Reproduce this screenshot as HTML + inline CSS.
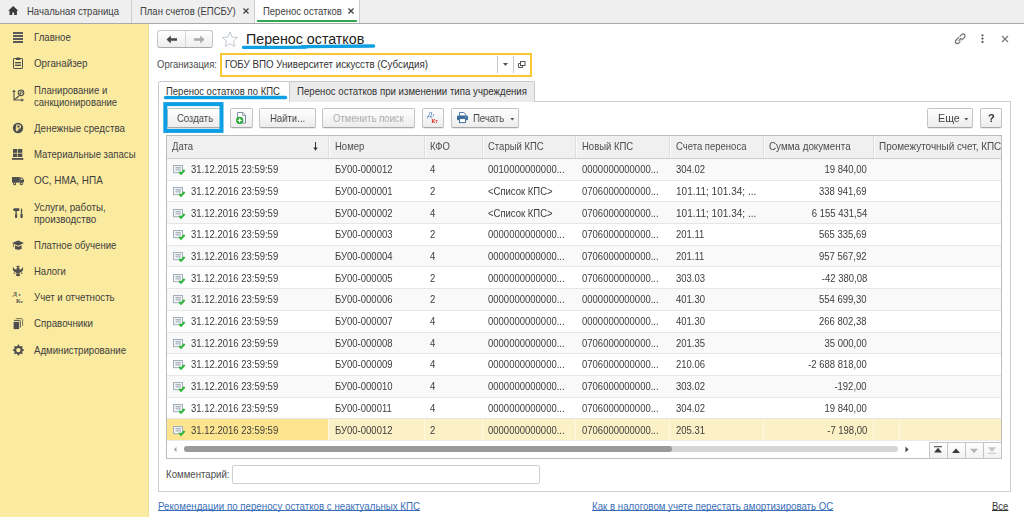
<!DOCTYPE html>
<html><head><meta charset="utf-8">
<style>
*{box-sizing:border-box;margin:0;padding:0}
html,body{width:1024px;height:517px;overflow:hidden;background:#fff;font-family:"Liberation Sans",sans-serif;font-size:9.5px;color:#4d4d4d}
.a{position:absolute;white-space:nowrap;line-height:12px;font-size:10.5px;transform:scaleX(0.905);transform-origin:0 0;margin-top:-1px}
svg.a{transform:none;margin-top:0}
#tabbar{position:absolute;left:0;top:0;width:1024px;height:24px;background:#efefef;border-bottom:1px solid #a9a9a9}
.vsep{position:absolute;top:0;width:1px;height:23px;background:#cdcdcd}
#side{position:absolute;left:0;top:24px;width:149px;height:493px;background:#fbeba0;border-right:1px solid #efdf98}
.si{color:#3e3e3e}
.btn{position:absolute;top:108px;height:20px;border:1px solid #c4c4c4;border-bottom-color:#a9a9a9;border-radius:2px;background:linear-gradient(#ffffff,#ececec);box-shadow:0 1px 0 rgba(0,0,0,0.08)}
.bt{position:absolute;white-space:nowrap;line-height:12px;color:#454545;font-size:10.5px;transform:scaleX(0.905);transform-origin:0 0;margin-top:-1px;will-change:transform}
#panel{position:absolute;left:158px;top:101px;width:853px;height:391px;border:1px solid #cfcfcf}
#table{position:absolute;left:166px;top:135px;width:836px;height:324px;border:1px solid #bdbdbd}
.hd{position:absolute;top:0;height:22px;background:#f2f2f2;border-bottom:1px solid #cfcfcf}
.csep{position:absolute;top:0;width:1px;height:22px;background:#dcdcdc}
.row{position:absolute;left:0;width:834px;height:21.7px;border-bottom:1px solid #e4e4e4}
.c{position:absolute;white-space:nowrap;line-height:12px;color:#3d3d3d;font-size:10.5px;transform:scaleX(0.905);transform-origin:0 0;margin-top:-1px}
</style></head><body>

<!-- TAB BAR -->
<div id="tabbar"></div>
<svg class="a" style="left:8px;top:6px" width="11" height="10" viewBox="0 0 11 10"><path d="M5.2 0 L10.2 4.7 L8.9 4.7 L8.9 9 L6.1 9 L6.1 6.4 L4.3 6.4 L4.3 9 L1.5 9 L1.5 4.7 L0.2 4.7 Z" fill="#3a3a3a"/></svg>
<div class="a" style="left:27px;top:5.9px;color:#404040">Начальная страница</div>
<div class="vsep" style="left:131px"></div>
<div class="a" style="left:139.5px;top:5.9px;color:#404040">План счетов (ЕПСБУ)</div>
<svg class="a" style="left:243px;top:8px" width="6" height="6" viewBox="0 0 6 6"><path d="M0.5 0.5 L5.5 5.5 M5.5 0.5 L0.5 5.5" stroke="#444" stroke-width="1.3"/></svg>
<div class="vsep" style="left:254px"></div>
<div style="position:absolute;left:255px;top:0;width:104px;height:23px;background:#fff"></div>
<div class="vsep" style="left:359px"></div>
<div style="position:absolute;left:257px;top:20px;width:100px;height:2px;background:#2fa84f"></div>
<div class="a" style="left:262.5px;top:5.9px;color:#404040">Перенос остатков</div>
<svg class="a" style="left:348px;top:8px" width="6" height="6" viewBox="0 0 6 6"><path d="M0.5 0.5 L5.5 5.5 M5.5 0.5 L0.5 5.5" stroke="#444" stroke-width="1.3"/></svg>

<!-- SIDEBAR -->
<div id="side"></div>
<div class="a si" style="left:34px;top:32px;transform:scaleX(0.9177)">Главное</div>
<div class="a si" style="left:34px;top:58px;transform:scaleX(0.9312)">Органайзер</div>
<div class="a si" style="left:34px;top:85px;transform:scaleX(0.9104)">Планирование и<br>санкционирование</div>
<div class="a si" style="left:34px;top:123px;transform:scaleX(0.9294)">Денежные средства</div>
<div class="a si" style="left:34px;top:149px;transform:scaleX(0.9131)">Материальные запасы</div>
<div class="a si" style="left:34px;top:175px;transform:scaleX(0.9430)">ОС, НМА, НПА</div>
<div class="a si" style="left:34px;top:202px;transform:scaleX(0.9349)">Услуги, работы,<br>производство</div>
<div class="a si" style="left:34px;top:240px;transform:scaleX(0.9141)">Платное обучение</div>
<div class="a si" style="left:34px;top:266px;transform:scaleX(0.9050)">Налоги</div>
<div class="a si" style="left:34px;top:292px;transform:scaleX(0.9213)">Учет и отчетность</div>
<div class="a si" style="left:34px;top:318px;transform:scaleX(0.9258)">Справочники</div>
<div class="a si" style="left:34px;top:345px;transform:scaleX(0.9195)">Администрирование</div>



<svg class="a" style="left:12px;top:31px" width="12" height="12" viewBox="0 0 12 12"><g fill="#5a5a5a"><rect x="1" y="1" width="10" height="2"/><rect x="1" y="4" width="10" height="2"/><rect x="1" y="7" width="10" height="2"/><rect x="1" y="10" width="10" height="2"/></g></svg>
<svg class="a" style="left:12px;top:57px" width="12" height="12" viewBox="0 0 12 12"><rect x="1.5" y="1.5" width="9" height="10" rx="0.6" fill="none" stroke="#4e4e4e" stroke-width="1"/><path d="M3.6 3 L4.6 0.6 L7.4 0.6 L8.4 3 Z" fill="#4e4e4e"/><rect x="3" y="5" width="6" height="1" fill="#4e4e4e"/><rect x="3" y="6" width="6" height="2" fill="#b9b08a"/><rect x="3" y="8" width="6" height="1" fill="#4e4e4e"/></svg>
<svg class="a" style="left:12px;top:89px" width="13" height="13" viewBox="0 0 13 13"><g stroke="#4e4e4e" stroke-width="1.1" fill="none"><path d="M2 2.5 L2 11 L10 11"/><path d="M2.5 10.5 L7 7"/><circle cx="9" cy="3.8" r="2.8"/></g><path d="M0.3 3 L2 0.6 L3.7 3 Z M9.5 9.3 L12 11 L9.5 12.7 Z" fill="#4e4e4e"/><path d="M8.3 6 L8.3 2.3 L9.6 2.3 Q10.7 2.3 10.7 3.3 Q10.7 4.3 9.6 4.3 L7.6 4.3" stroke="#4e4e4e" stroke-width="0.8" fill="none"/></svg>
<svg class="a" style="left:12px;top:122px" width="12" height="12" viewBox="0 0 12 12"><circle cx="6" cy="6" r="5.2" fill="#4e4e4e"/><path d="M4.8 9.3 L4.8 3 L6.9 3 Q8.5 3 8.5 4.6 Q8.5 6.2 6.9 6.2 L3.8 6.2 M3.8 7.7 L6.6 7.7" stroke="#fbeba0" stroke-width="1.2" fill="none"/></svg>
<svg class="a" style="left:12px;top:148px" width="12" height="12" viewBox="0 0 12 12"><g fill="#4e4e4e"><rect x="1" y="1" width="4.3" height="3.8"/><rect x="6" y="1" width="4.3" height="3.8"/><rect x="1" y="5.5" width="4.3" height="3.5"/><rect x="6" y="5.5" width="4.3" height="3.5"/><rect x="0" y="10" width="11.3" height="1.8"/></g></svg>
<svg class="a" style="left:12px;top:175px" width="13" height="11" viewBox="0 0 13 11"><g fill="#4e4e4e"><rect x="0" y="2" width="7.8" height="5.6"/><path d="M7.8 2.6 L10.3 2.6 L12 5 L12 7.6 L7.8 7.6 Z"/><circle cx="2.6" cy="8.7" r="1.6"/><circle cx="9.3" cy="8.7" r="1.6"/></g><rect x="8.8" y="3.5" width="1.6" height="1.5" fill="#fbeba0"/><circle cx="2.6" cy="8.7" r="0.6" fill="#fbeba0"/><circle cx="9.3" cy="8.7" r="0.6" fill="#fbeba0"/></svg>
<svg class="a" style="left:12px;top:206px" width="12" height="13" viewBox="0 0 12 13"><g fill="#4e4e4e"><path d="M0.8 3.6 L2.2 2.2 L7.3 2.2 L7.3 4.9 L2 4.9 Z"/><rect x="3.4" y="4.9" width="1.4" height="3.3"/><rect x="3" y="8" width="2.2" height="4" rx="0.8"/><path d="M9.55 1.6 Q10.4 3.5 10.2 6.8 L8.9 6.8 Q8.7 3.5 9.55 1.6 Z"/><rect x="9.1" y="6.6" width="0.9" height="1.2"/><rect x="8.4" y="7.6" width="2.3" height="4.4" rx="0.8"/></g></svg>
<svg class="a" style="left:12px;top:239px" width="13" height="12" viewBox="0 0 13 12"><g fill="#4e4e4e"><path d="M0 4 L6.2 1.4 L12 4 L6.2 6.8 Z"/><path d="M3 6.2 L3 10 Q6.2 11.4 9.6 10 L9.6 6.2 L6.2 7.8 Z"/><rect x="1" y="4.4" width="0.9" height="3.8" fill="#7a7355"/></g></svg>
<svg class="a" style="left:12px;top:265px" width="12" height="12" viewBox="0 0 12 12"><g fill="#4e4e4e"><rect x="4.6" y="0.8" width="2.8" height="1.6" rx="0.5"/><path d="M0.9 1.6 Q1.6 3.6 3 4.2 L4.6 4.4 L4.6 2.8 L7.4 2.8 L7.4 4.4 L9 4.2 Q10.4 3.6 11.1 1.6 Q11.6 5.2 10 6.6 L8 7.4 L7.4 8.6 L4.6 8.6 L4 7.4 L2 6.6 Q0.4 5.2 0.9 1.6 Z"/><ellipse cx="6" cy="9.9" rx="2.1" ry="1.3"/><rect x="1.6" y="7.4" width="1.6" height="1.4" rx="0.5"/><rect x="8.8" y="7.4" width="1.6" height="1.4" rx="0.5"/></g><path d="M3 3.3 L4 4 M9 3.3 L8 4" stroke="#fbeba0" stroke-width="0.8"/></svg>
<svg class="a" style="left:12px;top:291px" width="13" height="13" viewBox="0 0 13 13"><text x="0.5" y="5.2" font-family="Liberation Serif" font-weight="bold" font-size="6.6" fill="#505050">Д</text><text x="6.2" y="5.2" font-family="Liberation Serif" font-weight="bold" font-size="5" fill="#505050">т</text><text x="4" y="11.6" font-family="Liberation Serif" font-weight="bold" font-size="6.6" fill="#505050">К</text><text x="8.6" y="11.6" font-family="Liberation Serif" font-weight="bold" font-size="5" fill="#505050">т</text></svg>
<svg class="a" style="left:12px;top:317px" width="12" height="13" viewBox="0 0 12 13"><path d="M4.2 1.6 L9.6 1.6 Q10.6 1.6 10.6 2.6 L10.6 8.8" stroke="#7a7355" stroke-width="1" fill="none"/><path d="M2 3.4 L7.6 3.4 Q8.3 3.4 8.3 4.1 L8.3 10.6" stroke="#4e4e4e" stroke-width="1" fill="none"/><rect x="1.6" y="4.9" width="5.4" height="7.2" fill="#4e4e4e"/></svg>
<svg class="a" style="left:12px;top:344px" width="12" height="12" viewBox="0 0 12 12"><g fill="#4e4e4e"><path d="M6 0.6 L7 0.6 L7.4 2 L8.8 2.6 L10 1.9 L10.8 2.7 L10.1 3.9 L10.7 5.3 L12 5.6 L12 6.6 L10.7 7 L10.1 8.3 L10.8 9.5 L10 10.3 L8.8 9.6 L7.4 10.2 L7 11.6 L5.8 11.6 L5.4 10.2 L4 9.6 L2.8 10.3 L2 9.5 L2.7 8.3 L2.1 7 L0.8 6.6 L0.8 5.6 L2.1 5.3 L2.7 3.9 L2 2.7 L2.8 1.9 L4 2.6 L5.4 2 Z"/></g><circle cx="6.4" cy="6.1" r="2.2" fill="#fbeba0"/></svg>

<!-- FORM -->

<!-- header -->
<div style="position:absolute;left:157px;top:30px;width:56px;height:18px;border:1px solid #c6c6c6;border-bottom-color:#a8a8a8;border-radius:3px;background:linear-gradient(#fff,#eeeeee)"></div>
<div style="position:absolute;left:185px;top:31px;width:1px;height:16px;background:#d6d6d6"></div>
<svg class="a" style="left:166px;top:35px" width="12" height="9" viewBox="0 0 12 9"><path d="M0.5 4.5 L4.8 0.5 L4.8 3.3 L11 3.3 L11 5.7 L4.8 5.7 L4.8 8.5 Z" fill="#474747"/></svg>
<svg class="a" style="left:193px;top:35px" width="12" height="9" viewBox="0 0 12 9"><path d="M11.5 4.5 L7.2 0.5 L7.2 3.3 L1 3.3 L1 5.7 L7.2 5.7 L7.2 8.5 Z" fill="#ababab"/></svg>
<svg class="a" style="left:221px;top:31px" width="18" height="17" viewBox="0 0 18 17"><path d="M9 1 L11.2 6.1 L16.6 6.5 L12.5 10 L13.8 15.5 L9 12.6 L4.2 15.5 L5.5 10 L1.4 6.5 L6.8 6.1 Z" fill="none" stroke="#c3c9d0" stroke-width="1"/></svg>
<div class="a" style="left:246px;top:30.5px;font-size:14px;line-height:17px;color:#222;transform:scaleX(1.017);margin-top:0">Перенос остатков</div>
<svg class="a" style="left:240px;top:43px" width="138" height="7" viewBox="0 0 138 7"><path d="M3.4 4.3 Q35 4.5 66 4.2" stroke="#0fa0e4" stroke-width="3.3" fill="none" stroke-linecap="round"/><path d="M62 3.6 Q100 3.3 133.6 3" stroke="#0fa0e4" stroke-width="3.3" fill="none" stroke-linecap="round"/></svg>
<svg class="a" style="left:953px;top:33px" width="14" height="12" viewBox="0 0 14 12"><g fill="none" stroke="#6e6e6e" stroke-width="1.2"><path d="M6 4.2 L3.2 7 Q1.6 8.6 3 10 Q4.4 11.4 6 9.8 L7.4 8.4"/><path d="M6.6 3.6 L8.4 1.8 Q10 0.2 11.4 1.6 Q12.8 3 11.2 4.6 L8.4 7.4"/><path d="M5.6 7.8 L8.4 5"/></g></svg>
<svg class="a" style="left:980px;top:34px" width="5" height="10" viewBox="0 0 5 10"><g fill="#555"><circle cx="2.5" cy="1.3" r="1.1"/><circle cx="2.5" cy="4.6" r="1.1"/><circle cx="2.5" cy="7.9" r="1.1"/></g></svg>
<svg class="a" style="left:1001px;top:35px" width="8" height="8" viewBox="0 0 8 8"><path d="M1 1 L7 7 M7 1 L1 7" stroke="#777" stroke-width="1.2"/></svg>

<div class="a" style="left:157px;top:59px;color:#4d4d4d">Организация:</div>
<div style="position:absolute;left:220px;top:53px;width:312px;height:24px;border:2px solid #f8c834;background:#fff"></div>
<div class="a" style="left:225px;top:59px;color:#333;transform:scaleX(0.929)">ГОБУ ВПО Университет искусств (Субсидия)</div>
<div style="position:absolute;left:497px;top:56px;width:1px;height:17px;background:#c8c8c8"></div>
<div style="position:absolute;left:513px;top:56px;width:1px;height:17px;background:#c8c8c8"></div>
<svg class="a" style="left:503px;top:63px" width="5" height="3" viewBox="0 0 5 3"><path d="M0 0 L5 0 L2.5 3 Z" fill="#555"/></svg>
<svg class="a" style="left:517px;top:60px" width="9" height="9" viewBox="0 0 9 9"><g fill="none" stroke="#555" stroke-width="1"><rect x="3.5" y="1.5" width="4.5" height="4"/><path d="M3.5 3.5 L1.5 3.5 L1.5 7.5 L5.5 7.5 L5.5 5.5"/></g></svg>

<!-- tabs -->
<div id="panel"></div>
<div style="position:absolute;left:289px;top:81px;width:246px;height:21px;background:#ebebeb;border:1px solid #c9c9c9;border-bottom:none;border-radius:2px 2px 0 0"></div>
<div style="position:absolute;left:158px;top:81px;width:132px;height:21px;background:#fff;border:1px solid #c9c9c9;border-bottom:none;border-radius:2px 2px 0 0"></div>
<div class="a" style="left:166px;top:86px;color:#333">Перенос остатков по КПС</div>
<div class="a" style="left:297px;top:86px;color:#333;transform:scaleX(0.920)">Перенос остатков при изменении типа учреждения</div>
<svg class="a" style="left:161px;top:94px" width="130" height="7" viewBox="0 0 130 7"><path d="M4.4 3.6 Q60 3.5 124.6 3.5" stroke="#0fa0e4" stroke-width="3.4" fill="none" stroke-linecap="round"/></svg>

<!-- command bar -->
<div class="btn" style="left:167px;width:54px"></div>
<div class="bt" style="left:176.5px;top:113px">Создать</div>
<svg class="a" style="left:161px;top:100px" width="65" height="35" viewBox="0 0 65 35"><rect x="4.3" y="4.1" width="56.2" height="26.8" fill="none" stroke="#0d9fe3" stroke-width="4"/></svg>
<div class="btn" style="left:230px;width:23px"></div>
<svg class="a" style="left:234px;top:111px" width="14" height="14" viewBox="0 0 14 14"><path d="M3.5 1.5 L8.8 1.5 L11.5 4.2 L11.5 12 L3.5 12 Z" fill="#fff" stroke="#7d8ea3" stroke-width="1"/><path d="M8.5 1.5 L8.5 4.5 L11.5 4.5" fill="none" stroke="#7d8ea3" stroke-width="0.8"/><circle cx="5.7" cy="9.3" r="3.6" fill="#23a634"/><path d="M5.7 7.2 L5.7 11.4 M3.6 9.3 L7.8 9.3" stroke="#fff" stroke-width="1.3"/></svg>
<div class="btn" style="left:259px;width:57px"></div>
<div class="bt" style="left:269.5px;top:113px">Найти...</div>
<div class="btn" style="left:322px;width:93px"></div>
<div class="bt" style="left:333px;top:113px;color:#a9a9a9">Отменить поиск</div>
<div class="btn" style="left:422px;width:22px"></div>
<svg class="a" style="left:425px;top:110px" width="16" height="15" viewBox="0 0 16 15"><g transform="translate(1.5,0) skewX(-14)"><text x="2.4" y="7.4" font-family="Liberation Sans" font-size="7" fill="#4a7fb8">Д</text><text x="7" y="7.4" font-family="Liberation Sans" font-size="5.2" fill="#4a7fb8">т</text></g><text x="6.6" y="13" font-family="Liberation Sans" font-weight="bold" font-size="6.2" fill="#d6281c">К</text><text x="10.6" y="13" font-family="Liberation Sans" font-weight="bold" font-size="4.8" fill="#d6281c">т</text></svg>
<div class="btn" style="left:451px;width:68px"></div>
<svg class="a" style="left:456px;top:111px" width="13" height="13" viewBox="0 0 13 13"><path d="M3.5 4.5 L3.5 1.5 L7.6 1.5 L9.5 3.2 L9.5 4.5" fill="#fff" stroke="#3a6a98" stroke-width="0.9"/><rect x="1" y="4.5" width="11" height="4.8" rx="1.3" fill="#3a6a98"/><rect x="3.5" y="7.6" width="6" height="4" fill="#fff" stroke="#3a6a98" stroke-width="0.9"/><rect x="9" y="5.6" width="1.6" height="0.8" fill="#a8c0d8"/></svg>
<div class="bt" style="left:473px;top:113px">Печать</div>
<svg class="a" style="left:510px;top:117.5px" width="5" height="3" viewBox="0 0 5 3"><path d="M0.3 0 L4.3 0 L2.3 2.5 Z" fill="#555"/></svg>
<div class="btn" style="left:927px;width:46px"></div>
<div class="bt" style="left:937.5px;top:113px;transform:scaleX(1.02)">Еще</div>
<svg class="a" style="left:964px;top:117.5px" width="5" height="3" viewBox="0 0 5 3"><path d="M0.3 0 L4.3 0 L2.3 2.5 Z" fill="#555"/></svg>
<div class="btn" style="left:980px;width:22px"></div>
<div class="bt" style="left:987.5px;top:111.5px;font-weight:bold;font-size:11px;color:#333;transform:none;margin-top:0">?</div>

<!-- TABLE -->
<div style="position:absolute;left:166px;top:135px;width:836px;height:324px;border:1px solid #bcbcbc;background:#fff"></div>
<div style="position:absolute;left:167px;top:136px;width:834px;height:23px;background:#f0f0f0;border-bottom:1px solid #cdcdcd"></div>
<div style="position:absolute;left:328px;top:136px;width:1px;height:22px;background:#dedede"></div>
<div style="position:absolute;left:329px;top:136px;width:1px;height:22px;background:#fafafa"></div>
<div style="position:absolute;left:424px;top:136px;width:1px;height:22px;background:#dedede"></div>
<div style="position:absolute;left:425px;top:136px;width:1px;height:22px;background:#fafafa"></div>
<div style="position:absolute;left:482px;top:136px;width:1px;height:22px;background:#dedede"></div>
<div style="position:absolute;left:483px;top:136px;width:1px;height:22px;background:#fafafa"></div>
<div style="position:absolute;left:575px;top:136px;width:1px;height:22px;background:#dedede"></div>
<div style="position:absolute;left:576px;top:136px;width:1px;height:22px;background:#fafafa"></div>
<div style="position:absolute;left:669px;top:136px;width:1px;height:22px;background:#dedede"></div>
<div style="position:absolute;left:670px;top:136px;width:1px;height:22px;background:#fafafa"></div>
<div style="position:absolute;left:763px;top:136px;width:1px;height:22px;background:#dedede"></div>
<div style="position:absolute;left:764px;top:136px;width:1px;height:22px;background:#fafafa"></div>
<div style="position:absolute;left:873px;top:136px;width:1px;height:22px;background:#dedede"></div>
<div style="position:absolute;left:874px;top:136px;width:1px;height:22px;background:#fafafa"></div>
<div class="c" style="left:172px;top:141px;color:#4d4d4d">Дата</div>
<div class="c" style="left:335px;top:141px;color:#4d4d4d">Номер</div>
<div class="c" style="left:430px;top:141px;color:#4d4d4d">КФО</div>
<div class="c" style="left:488px;top:141px;color:#4d4d4d">Старый КПС</div>
<div class="c" style="left:582px;top:141px;color:#4d4d4d">Новый КПС</div>
<div class="c" style="left:675.5px;top:141px;color:#4d4d4d">Счета переноса</div>
<div class="c" style="left:769px;top:141px;color:#4d4d4d;transform:scaleX(0.937)">Сумма документа</div>
<div class="c" style="left:879px;top:141px;color:#4d4d4d;transform:scaleX(0.946)">Промежуточный счет, КПС</div>
<svg class="a" style="left:313px;top:142px" width="5" height="9" viewBox="0 0 5 9"><path d="M2.5 0 L2.5 8" stroke="#333" stroke-width="1"/><path d="M0.3 5.6 L2.5 8.8 L4.7 5.6 Z" fill="#333"/></svg>
<div style="position:absolute;left:167px;top:159.0px;width:834px;height:21.7px;background:#f9f9f9;border-bottom:1px solid #e6e6e6"></div>
<svg class="a" style="left:172px;top:165px" width="14" height="11" viewBox="0 0 14 11"><rect x="1.5" y="0.5" width="9" height="7.2" fill="#f4f6f8" stroke="#a3aebb" stroke-width="1"/><rect x="3.5" y="2.4" width="5.4" height="2.6" fill="#d3d8de"/><path d="M3.5 2.4 L8.9 2.4 M3.5 5 L8.9 5" stroke="#9aa5b2" stroke-width="0.8"/><path d="M7.2 6.9 L9 8.8 L12.6 5" stroke="#2fb53c" stroke-width="2" fill="none"/></svg>
<div class="c" style="left:190.5px;top:164px">31.12.2015 23:59:59</div>
<div class="c" style="left:335px;top:164px">БУ00-000012</div>
<div class="c" style="left:430px;top:164px">4</div>
<div class="c" style="left:488px;top:164px">0010000000000...</div>
<div class="c" style="left:582px;top:164px">0000000000000...</div>
<div class="c" style="left:675.5px;top:164px">304.02</div>
<div class="c" style="right:157px;top:164px;text-align:right;transform-origin:100% 0">19 840,00</div>
<div style="position:absolute;left:167px;top:180.7px;width:834px;height:21.7px;background:#ffffff;border-bottom:1px solid #e6e6e6"></div>
<svg class="a" style="left:172px;top:187px" width="14" height="11" viewBox="0 0 14 11"><rect x="1.5" y="0.5" width="9" height="7.2" fill="#f4f6f8" stroke="#a3aebb" stroke-width="1"/><rect x="3.5" y="2.4" width="5.4" height="2.6" fill="#d3d8de"/><path d="M3.5 2.4 L8.9 2.4 M3.5 5 L8.9 5" stroke="#9aa5b2" stroke-width="0.8"/><path d="M7.2 6.9 L9 8.8 L12.6 5" stroke="#2fb53c" stroke-width="2" fill="none"/></svg>
<div class="c" style="left:190.5px;top:186px">31.12.2016 23:59:59</div>
<div class="c" style="left:335px;top:186px">БУ00-000001</div>
<div class="c" style="left:430px;top:186px">2</div>
<div class="c" style="left:488px;top:186px">&lt;Список КПС&gt;</div>
<div class="c" style="left:582px;top:186px">0706000000000...</div>
<div class="c" style="left:675.5px;top:186px;transform:scaleX(0.957)">101.11; 101.34; ...</div>
<div class="c" style="right:157px;top:186px;text-align:right;transform-origin:100% 0">338 941,69</div>
<div style="position:absolute;left:167px;top:202.4px;width:834px;height:21.7px;background:#f9f9f9;border-bottom:1px solid #e6e6e6"></div>
<svg class="a" style="left:172px;top:209px" width="14" height="11" viewBox="0 0 14 11"><rect x="1.5" y="0.5" width="9" height="7.2" fill="#f4f6f8" stroke="#a3aebb" stroke-width="1"/><rect x="3.5" y="2.4" width="5.4" height="2.6" fill="#d3d8de"/><path d="M3.5 2.4 L8.9 2.4 M3.5 5 L8.9 5" stroke="#9aa5b2" stroke-width="0.8"/><path d="M7.2 6.9 L9 8.8 L12.6 5" stroke="#2fb53c" stroke-width="2" fill="none"/></svg>
<div class="c" style="left:190.5px;top:208px">31.12.2016 23:59:59</div>
<div class="c" style="left:335px;top:208px">БУ00-000002</div>
<div class="c" style="left:430px;top:208px">4</div>
<div class="c" style="left:488px;top:208px">&lt;Список КПС&gt;</div>
<div class="c" style="left:582px;top:208px">0706000000000...</div>
<div class="c" style="left:675.5px;top:208px;transform:scaleX(0.957)">101.11; 101.34; ...</div>
<div class="c" style="right:157px;top:208px;text-align:right;transform-origin:100% 0">6 155 431,54</div>
<div style="position:absolute;left:167px;top:224.1px;width:834px;height:21.7px;background:#ffffff;border-bottom:1px solid #e6e6e6"></div>
<svg class="a" style="left:172px;top:230px" width="14" height="11" viewBox="0 0 14 11"><rect x="1.5" y="0.5" width="9" height="7.2" fill="#f4f6f8" stroke="#a3aebb" stroke-width="1"/><rect x="3.5" y="2.4" width="5.4" height="2.6" fill="#d3d8de"/><path d="M3.5 2.4 L8.9 2.4 M3.5 5 L8.9 5" stroke="#9aa5b2" stroke-width="0.8"/><path d="M7.2 6.9 L9 8.8 L12.6 5" stroke="#2fb53c" stroke-width="2" fill="none"/></svg>
<div class="c" style="left:190.5px;top:229px">31.12.2016 23:59:59</div>
<div class="c" style="left:335px;top:229px">БУ00-000003</div>
<div class="c" style="left:430px;top:229px">2</div>
<div class="c" style="left:488px;top:229px">0000000000000...</div>
<div class="c" style="left:582px;top:229px">0706000000000...</div>
<div class="c" style="left:675.5px;top:229px">201.11</div>
<div class="c" style="right:157px;top:229px;text-align:right;transform-origin:100% 0">565 335,69</div>
<div style="position:absolute;left:167px;top:245.8px;width:834px;height:21.7px;background:#f9f9f9;border-bottom:1px solid #e6e6e6"></div>
<svg class="a" style="left:172px;top:252px" width="14" height="11" viewBox="0 0 14 11"><rect x="1.5" y="0.5" width="9" height="7.2" fill="#f4f6f8" stroke="#a3aebb" stroke-width="1"/><rect x="3.5" y="2.4" width="5.4" height="2.6" fill="#d3d8de"/><path d="M3.5 2.4 L8.9 2.4 M3.5 5 L8.9 5" stroke="#9aa5b2" stroke-width="0.8"/><path d="M7.2 6.9 L9 8.8 L12.6 5" stroke="#2fb53c" stroke-width="2" fill="none"/></svg>
<div class="c" style="left:190.5px;top:251px">31.12.2016 23:59:59</div>
<div class="c" style="left:335px;top:251px">БУ00-000004</div>
<div class="c" style="left:430px;top:251px">4</div>
<div class="c" style="left:488px;top:251px">0000000000000...</div>
<div class="c" style="left:582px;top:251px">0706000000000...</div>
<div class="c" style="left:675.5px;top:251px">201.11</div>
<div class="c" style="right:157px;top:251px;text-align:right;transform-origin:100% 0">957 567,92</div>
<div style="position:absolute;left:167px;top:267.5px;width:834px;height:21.7px;background:#ffffff;border-bottom:1px solid #e6e6e6"></div>
<svg class="a" style="left:172px;top:274px" width="14" height="11" viewBox="0 0 14 11"><rect x="1.5" y="0.5" width="9" height="7.2" fill="#f4f6f8" stroke="#a3aebb" stroke-width="1"/><rect x="3.5" y="2.4" width="5.4" height="2.6" fill="#d3d8de"/><path d="M3.5 2.4 L8.9 2.4 M3.5 5 L8.9 5" stroke="#9aa5b2" stroke-width="0.8"/><path d="M7.2 6.9 L9 8.8 L12.6 5" stroke="#2fb53c" stroke-width="2" fill="none"/></svg>
<div class="c" style="left:190.5px;top:273px">31.12.2016 23:59:59</div>
<div class="c" style="left:335px;top:273px">БУ00-000005</div>
<div class="c" style="left:430px;top:273px">2</div>
<div class="c" style="left:488px;top:273px">0000000000000...</div>
<div class="c" style="left:582px;top:273px">0706000000000...</div>
<div class="c" style="left:675.5px;top:273px">303.03</div>
<div class="c" style="right:157px;top:273px;text-align:right;transform-origin:100% 0">-42 380,08</div>
<div style="position:absolute;left:167px;top:289.2px;width:834px;height:21.7px;background:#f9f9f9;border-bottom:1px solid #e6e6e6"></div>
<svg class="a" style="left:172px;top:295px" width="14" height="11" viewBox="0 0 14 11"><rect x="1.5" y="0.5" width="9" height="7.2" fill="#f4f6f8" stroke="#a3aebb" stroke-width="1"/><rect x="3.5" y="2.4" width="5.4" height="2.6" fill="#d3d8de"/><path d="M3.5 2.4 L8.9 2.4 M3.5 5 L8.9 5" stroke="#9aa5b2" stroke-width="0.8"/><path d="M7.2 6.9 L9 8.8 L12.6 5" stroke="#2fb53c" stroke-width="2" fill="none"/></svg>
<div class="c" style="left:190.5px;top:294px">31.12.2016 23:59:59</div>
<div class="c" style="left:335px;top:294px">БУ00-000006</div>
<div class="c" style="left:430px;top:294px">2</div>
<div class="c" style="left:488px;top:294px">0000000000000...</div>
<div class="c" style="left:582px;top:294px">0000000000000...</div>
<div class="c" style="left:675.5px;top:294px">401.30</div>
<div class="c" style="right:157px;top:294px;text-align:right;transform-origin:100% 0">554 699,30</div>
<div style="position:absolute;left:167px;top:310.9px;width:834px;height:21.7px;background:#ffffff;border-bottom:1px solid #e6e6e6"></div>
<svg class="a" style="left:172px;top:317px" width="14" height="11" viewBox="0 0 14 11"><rect x="1.5" y="0.5" width="9" height="7.2" fill="#f4f6f8" stroke="#a3aebb" stroke-width="1"/><rect x="3.5" y="2.4" width="5.4" height="2.6" fill="#d3d8de"/><path d="M3.5 2.4 L8.9 2.4 M3.5 5 L8.9 5" stroke="#9aa5b2" stroke-width="0.8"/><path d="M7.2 6.9 L9 8.8 L12.6 5" stroke="#2fb53c" stroke-width="2" fill="none"/></svg>
<div class="c" style="left:190.5px;top:316px">31.12.2016 23:59:59</div>
<div class="c" style="left:335px;top:316px">БУ00-000007</div>
<div class="c" style="left:430px;top:316px">4</div>
<div class="c" style="left:488px;top:316px">0000000000000...</div>
<div class="c" style="left:582px;top:316px">0000000000000...</div>
<div class="c" style="left:675.5px;top:316px">401.30</div>
<div class="c" style="right:157px;top:316px;text-align:right;transform-origin:100% 0">266 802,38</div>
<div style="position:absolute;left:167px;top:332.6px;width:834px;height:21.7px;background:#f9f9f9;border-bottom:1px solid #e6e6e6"></div>
<svg class="a" style="left:172px;top:339px" width="14" height="11" viewBox="0 0 14 11"><rect x="1.5" y="0.5" width="9" height="7.2" fill="#f4f6f8" stroke="#a3aebb" stroke-width="1"/><rect x="3.5" y="2.4" width="5.4" height="2.6" fill="#d3d8de"/><path d="M3.5 2.4 L8.9 2.4 M3.5 5 L8.9 5" stroke="#9aa5b2" stroke-width="0.8"/><path d="M7.2 6.9 L9 8.8 L12.6 5" stroke="#2fb53c" stroke-width="2" fill="none"/></svg>
<div class="c" style="left:190.5px;top:338px">31.12.2016 23:59:59</div>
<div class="c" style="left:335px;top:338px">БУ00-000008</div>
<div class="c" style="left:430px;top:338px">4</div>
<div class="c" style="left:488px;top:338px">0000000000000...</div>
<div class="c" style="left:582px;top:338px">0706000000000...</div>
<div class="c" style="left:675.5px;top:338px">201.35</div>
<div class="c" style="right:157px;top:338px;text-align:right;transform-origin:100% 0">35 000,00</div>
<div style="position:absolute;left:167px;top:354.3px;width:834px;height:21.7px;background:#ffffff;border-bottom:1px solid #e6e6e6"></div>
<svg class="a" style="left:172px;top:360px" width="14" height="11" viewBox="0 0 14 11"><rect x="1.5" y="0.5" width="9" height="7.2" fill="#f4f6f8" stroke="#a3aebb" stroke-width="1"/><rect x="3.5" y="2.4" width="5.4" height="2.6" fill="#d3d8de"/><path d="M3.5 2.4 L8.9 2.4 M3.5 5 L8.9 5" stroke="#9aa5b2" stroke-width="0.8"/><path d="M7.2 6.9 L9 8.8 L12.6 5" stroke="#2fb53c" stroke-width="2" fill="none"/></svg>
<div class="c" style="left:190.5px;top:359px">31.12.2016 23:59:59</div>
<div class="c" style="left:335px;top:359px">БУ00-000009</div>
<div class="c" style="left:430px;top:359px">4</div>
<div class="c" style="left:488px;top:359px">0000000000000...</div>
<div class="c" style="left:582px;top:359px">0706000000000...</div>
<div class="c" style="left:675.5px;top:359px">210.06</div>
<div class="c" style="right:157px;top:359px;text-align:right;transform-origin:100% 0">-2 688 818,00</div>
<div style="position:absolute;left:167px;top:376.0px;width:834px;height:21.7px;background:#f9f9f9;border-bottom:1px solid #e6e6e6"></div>
<svg class="a" style="left:172px;top:382px" width="14" height="11" viewBox="0 0 14 11"><rect x="1.5" y="0.5" width="9" height="7.2" fill="#f4f6f8" stroke="#a3aebb" stroke-width="1"/><rect x="3.5" y="2.4" width="5.4" height="2.6" fill="#d3d8de"/><path d="M3.5 2.4 L8.9 2.4 M3.5 5 L8.9 5" stroke="#9aa5b2" stroke-width="0.8"/><path d="M7.2 6.9 L9 8.8 L12.6 5" stroke="#2fb53c" stroke-width="2" fill="none"/></svg>
<div class="c" style="left:190.5px;top:381px">31.12.2016 23:59:59</div>
<div class="c" style="left:335px;top:381px">БУ00-000010</div>
<div class="c" style="left:430px;top:381px">4</div>
<div class="c" style="left:488px;top:381px">0000000000000...</div>
<div class="c" style="left:582px;top:381px">0706000000000...</div>
<div class="c" style="left:675.5px;top:381px">303.02</div>
<div class="c" style="right:157px;top:381px;text-align:right;transform-origin:100% 0">-192,00</div>
<div style="position:absolute;left:167px;top:397.7px;width:834px;height:21.7px;background:#ffffff;border-bottom:1px solid #e6e6e6"></div>
<svg class="a" style="left:172px;top:404px" width="14" height="11" viewBox="0 0 14 11"><rect x="1.5" y="0.5" width="9" height="7.2" fill="#f4f6f8" stroke="#a3aebb" stroke-width="1"/><rect x="3.5" y="2.4" width="5.4" height="2.6" fill="#d3d8de"/><path d="M3.5 2.4 L8.9 2.4 M3.5 5 L8.9 5" stroke="#9aa5b2" stroke-width="0.8"/><path d="M7.2 6.9 L9 8.8 L12.6 5" stroke="#2fb53c" stroke-width="2" fill="none"/></svg>
<div class="c" style="left:190.5px;top:403px">31.12.2016 23:59:59</div>
<div class="c" style="left:335px;top:403px">БУ00-000011</div>
<div class="c" style="left:430px;top:403px">4</div>
<div class="c" style="left:488px;top:403px">0000000000000...</div>
<div class="c" style="left:582px;top:403px">0706000000000...</div>
<div class="c" style="left:675.5px;top:403px">304.02</div>
<div class="c" style="right:157px;top:403px;text-align:right;transform-origin:100% 0">19 840,00</div>
<div style="position:absolute;left:167px;top:419.4px;width:834px;height:21.7px;background:#fcf0c6;border-bottom:1px solid #ebebeb"></div>
<div style="position:absolute;left:167px;top:419.4px;width:161px;height:20.7px;background:#fde48e"></div>
<div style="position:absolute;left:328px;top:419.4px;width:1px;height:20.7px;background:#fff8e0"></div>
<div style="position:absolute;left:424px;top:419.4px;width:1px;height:20.7px;background:#fff8e0"></div>
<div style="position:absolute;left:482px;top:419.4px;width:1px;height:20.7px;background:#fff8e0"></div>
<div style="position:absolute;left:575px;top:419.4px;width:1px;height:20.7px;background:#fff8e0"></div>
<div style="position:absolute;left:669px;top:419.4px;width:1px;height:20.7px;background:#fff8e0"></div>
<div style="position:absolute;left:763px;top:419.4px;width:1px;height:20.7px;background:#fff8e0"></div>
<div style="position:absolute;left:873px;top:419.4px;width:1px;height:20.7px;background:#fff8e0"></div>
<div style="position:absolute;left:899px;top:419.4px;width:1px;height:20.7px;background:#fff8e0"></div>
<svg class="a" style="left:172px;top:426px" width="14" height="11" viewBox="0 0 14 11"><rect x="1.5" y="0.5" width="9" height="7.2" fill="#f4f6f8" stroke="#a3aebb" stroke-width="1"/><rect x="3.5" y="2.4" width="5.4" height="2.6" fill="#d3d8de"/><path d="M3.5 2.4 L8.9 2.4 M3.5 5 L8.9 5" stroke="#9aa5b2" stroke-width="0.8"/><path d="M7.2 6.9 L9 8.8 L12.6 5" stroke="#2fb53c" stroke-width="2" fill="none"/></svg>
<div class="c" style="left:190.5px;top:425px">31.12.2016 23:59:59</div>
<div class="c" style="left:335px;top:425px">БУ00-000012</div>
<div class="c" style="left:430px;top:425px">2</div>
<div class="c" style="left:488px;top:425px">0000000000000...</div>
<div class="c" style="left:582px;top:425px">0706000000000...</div>
<div class="c" style="left:675.5px;top:425px">205.31</div>
<div class="c" style="right:157px;top:425px;text-align:right;transform-origin:100% 0">-7 198,00</div>
<div style="position:absolute;left:167px;top:441px;width:834px;height:17px;background:#fff"></div>
<div style="position:absolute;left:184px;top:446px;width:714px;height:6px;border-radius:3px;background:#d6d6d6"></div>
<div style="position:absolute;left:184px;top:446px;width:488px;height:6px;border-radius:3px;background:#9a9a9a"></div>
<svg class="a" style="left:173px;top:446px" width="4" height="7" viewBox="0 0 4 7"><path d="M3.5 0.8 L0.8 3.5 L3.5 6.2 Z" fill="#a8a8a8"/></svg>
<svg class="a" style="left:905px;top:446px" width="4" height="7" viewBox="0 0 4 7"><path d="M0.5 0.5 L3.5 3.5 L0.5 6.5 Z" fill="#444"/></svg>
<div style="position:absolute;left:929px;top:442px;width:73px;height:17px;border:1px solid #c4c4c4;background:linear-gradient(#fff,#f1f1f1)"></div>
<div style="position:absolute;left:947px;top:442px;width:1px;height:17px;background:#c4c4c4"></div>
<div style="position:absolute;left:965px;top:442px;width:1px;height:17px;background:#c4c4c4"></div>
<div style="position:absolute;left:983px;top:442px;width:1px;height:17px;background:#c4c4c4"></div>
<svg class="a" style="left:933px;top:446px" width="10" height="8" viewBox="0 0 10 8"><rect x="1" y="0.2" width="8" height="1" fill="#3a3a3a"/><path d="M1 6.6 L5 1.8 L9 6.6 Z" fill="#3a3a3a"/></svg>
<svg class="a" style="left:951px;top:448px" width="10" height="6" viewBox="0 0 10 6"><path d="M1 5 L5 0.6 L9 5 Z" fill="#3a3a3a"/></svg>
<svg class="a" style="left:969px;top:448px" width="10" height="6" viewBox="0 0 10 6"><path d="M1 0.8 L5 5.2 L9 0.8 Z" fill="#b5b5b5"/></svg>
<svg class="a" style="left:987px;top:446px" width="10" height="9" viewBox="0 0 10 9"><path d="M1 1.2 L5 6 L9 1.2 Z" fill="#c5c5c5"/><rect x="1" y="6.8" width="8" height="1" fill="#c5c5c5"/></svg>
<!-- /TABLE -->
<!-- comment -->
<div class="a" style="left:165.5px;top:469px;color:#4d4d4d;transform:scaleX(0.92)">Комментарий:</div>
<div style="position:absolute;left:232px;top:465px;width:308px;height:19px;border:1px solid #cfcfcf;border-radius:2px;background:#fff"></div>
<!-- links -->
<div class="a" style="left:158px;top:501px;color:#3b6fb8;text-decoration:underline;text-decoration-skip-ink:none;text-underline-offset:-0.2px;transform:scaleX(0.926)">Рекомендации по переносу остатков с неактуальных КПС</div>
<div class="a" style="left:592px;top:501px;color:#3b6fb8;text-decoration:underline;text-decoration-skip-ink:none;text-underline-offset:-0.2px;transform:scaleX(0.922)">Как в налоговом учете перестать амортизировать ОС</div>
<div class="a" style="left:992px;top:501px;color:#333;text-decoration:underline;text-decoration-skip-ink:none;text-underline-offset:-0.2px">Все</div>


</body></html>
